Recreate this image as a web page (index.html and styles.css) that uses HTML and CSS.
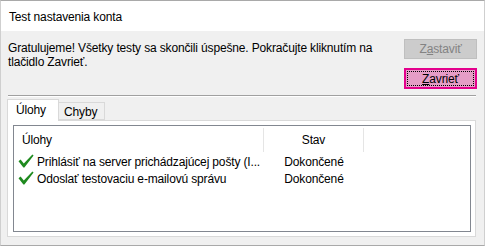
FILE: index.html
```html
<!DOCTYPE html>
<html>
<head>
<meta charset="utf-8">
<link rel="stylesheet" href="styles.css">
</head>
<body>
<div class="window">
  <div class="titlebar">Test nastavenia konta</div>
  <div class="content">
    <div class="top">
      <div class="message">Gratulujeme! Všetky testy sa skončili úspešne. Pokračujte kliknutím na tlačidlo Zavrieť.</div>
      <div class="buttons">
        <div class="btn disabled">Z<u>a</u>staviť</div>
        <div class="btn primary"><span class="focus"><u>Z</u>avrieť</span></div>
      </div>
    </div>
    <div class="separator"></div>
    <div class="tabs">
      <div class="tab active">Úlohy</div>
      <div class="tab">Chyby</div>
    </div>
    <div class="panel">
      <div class="listbox">
        <div class="header">
          <div class="col col-task">Úlohy</div>
          <div class="col col-status">Stav</div>
          <div class="col col-rest"></div>
        </div>
        <div class="row">
          <div class="cell cell-task">
            <svg class="check" viewBox="0 0 16 14" width="16" height="14"><path d="M0.5 7.2 L2.6 5.6 L5.8 9.6 L14.4 0.4 L15.6 1.4 L6.4 13.4 L5.4 13.4 Z" fill="#1f8a1f"/></svg>
            <span>Prihlásiť na server prichádzajúcej pošty (I...</span>
          </div>
          <div class="cell cell-status">Dokončené</div>
        </div>
        <div class="row">
          <div class="cell cell-task">
            <svg class="check" viewBox="0 0 16 14" width="16" height="14"><path d="M0.5 7.2 L2.6 5.6 L5.8 9.6 L14.4 0.4 L15.6 1.4 L6.4 13.4 L5.4 13.4 Z" fill="#1f8a1f"/></svg>
            <span>Odoslať testovaciu e-mailovú správu</span>
          </div>
          <div class="cell cell-status">Dokončené</div>
        </div>
      </div>
    </div>
  </div>
</div>
</body>
</html>
```
FILE: styles.css
```css
* { box-sizing: border-box; }
html, body { margin: 0; padding: 0; }
body {
  width: 485px;
  height: 247px;
  background: #ffffff;
  font-family: "Liberation Sans", Arial, sans-serif;
  font-size: 12px;
  letter-spacing: -0.15px;
  color: #000;
  overflow: hidden;
}
.window {
  width: 485px;
  height: 246px;
  border: 1px solid #a9a9a9;
  border-left-color: #cfcfcf;
  border-right-color: #cfcfcf;
  background: #f0f0f0;
  display: flex;
  flex-direction: column;
}
.titlebar {
  height: 30px;
  background: #ffffff;
  padding-left: 8px;
  display: flex;
  align-items: center;
  padding-top: 1px;
}
.content {
  flex: 1;
  padding: 8px 7px 0 6px;
  display: flex;
  flex-direction: column;
}
.top {
  display: flex;
  height: 56px;
}
.message {
  flex: 1;
  padding-left: 1px;
  padding-top: 2px;
  line-height: 14px;
  padding-right: 20px;
}
.buttons {
  width: 73px;
  display: flex;
  flex-direction: column;
  gap: 9px;
}
.btn {
  height: 20px;
  display: flex;
  align-items: center;
  justify-content: center;
  border: 1px solid #adadad;
}
.btn.disabled {
  background: #cccccc;
  border-color: #bfbfbf;
  color: #838383;
}
.btn.primary {
  height: 21px;
  border: 2px solid #e3008c;
  background: #e59dc6;
  padding: 1px;
}
.btn.primary .focus {
  display: flex;
  align-items: center;
  justify-content: center;
  width: 100%;
  height: 100%;
  border: 1px dotted #000;
}
.separator {
  margin-left: 1px;
  margin-right: 1px;
  height: 2px;
  border-top: 1px solid #a0a0a0;
  border-bottom: 1px solid #ffffff;
}
.tabs {
  display: flex;
  align-items: flex-end;
  margin-top: 2px;
  height: 22px;
  position: relative;
  z-index: 1;
  margin-bottom: -1px;
}
.tab {
  height: 18px;
  padding: 2px 7px 0 5px;
  border: 1px solid #d9d9d9;
  border-left: none;
  background: #f0f0f0;
  display: flex;
  align-items: center;
  margin-bottom: 1px;
}
.tab.active {
  height: 22px;
  width: 52px;
  padding: 0 0 2px 8px;
  border-left: 1px solid #d9d9d9;
  border-bottom: none;
  background: #ffffff;
  margin-bottom: 0;
}
.panel {
  height: 117px;
  margin-right: 1px;
  border: 1px solid #d9d9d9;
  background: #ffffff;
  padding: 4px 4px 4px 5px;
}
.listbox {
  height: 100%;
  border: 1px solid #828790;
  background: #ffffff;
}
.header {
  display: flex;
  height: 27px;
}
.col {
  display: flex;
  align-items: center;
  margin-top: 2px;
  height: 24px;
}
.col-task {
  width: 250px;
  padding-left: 8px;
  border-right: 1px solid #e5e5e5;
}
.col-status {
  width: 100px;
  justify-content: center;
  border-right: 1px solid #e5e5e5;
}
.row {
  display: flex;
  height: 17px;
  align-items: center;
}
.cell-task {
  width: 250px;
  display: flex;
  align-items: center;
  padding-left: 4px;
  gap: 3px;
  white-space: nowrap;
}
.check {
  flex: none;
  margin-top: -2px;
}
.cell-status {
  width: 100px;
  text-align: center;
  white-space: nowrap;
}
```
